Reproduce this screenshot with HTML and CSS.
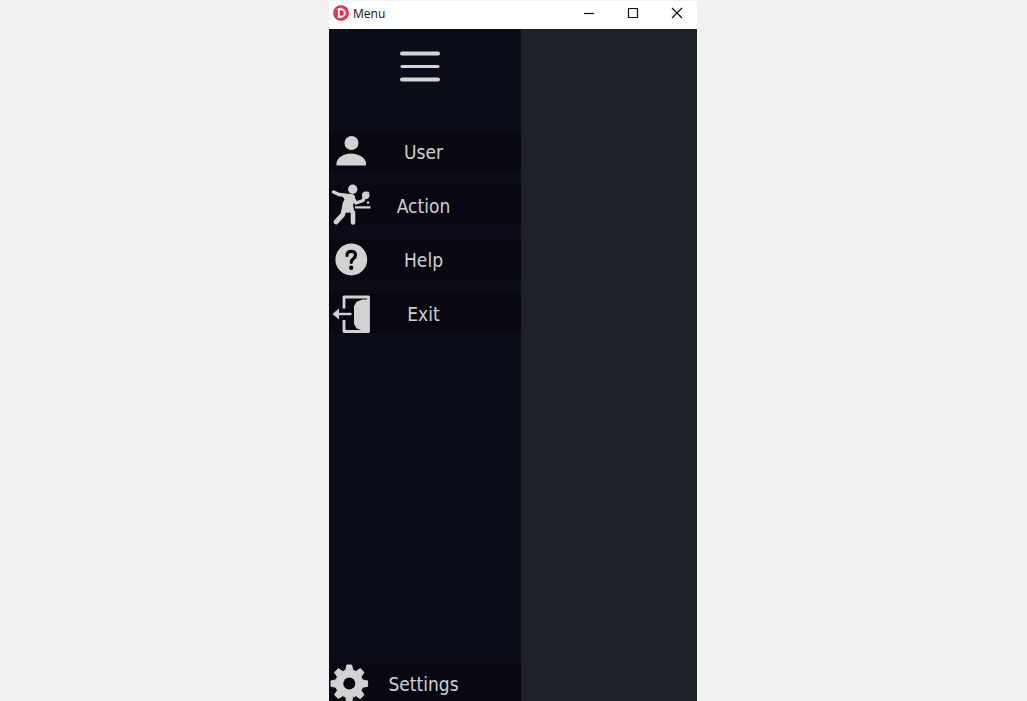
FILE: index.html
```html
<!DOCTYPE html>
<html lang="en">
<head>
<meta charset="utf-8">
<meta name="viewport" content="width=device-width, initial-scale=1">
<title>Menu</title>
<link rel="stylesheet" href="styles.css">
</head>
<body>
<div class="window">
  <header class="titlebar">
    <svg class="app-icon" viewBox="0 0 16 16" aria-hidden="true"><circle cx="8" cy="8" r="7.8" fill="#e3263b"/><circle cx="8" cy="8" r="5.9" fill="#fff" opacity=".3"/><circle cx="8" cy="8" r="5.2" fill="#e3263b"/><path d="M5.8 4.300H8a3.700 3.700 0 0 1 0 7.400H5.800Z" fill="none" stroke="#fff" stroke-width="2"/></svg>
    <h1 class="title">Menu</h1>
    <div class="controls">
      <button class="control" aria-label="Minimize"><svg viewBox="0 0 12 12"><path d="M1 6.5h10"/></svg></button>
      <button class="control" aria-label="Maximize"><svg viewBox="0 0 12 12"><path d="M1.5 1.5h9v9h-9z"/></svg></button>
      <button class="control" aria-label="Close"><svg viewBox="0 0 12 12"><path d="M1 1l10 10M11 1L1 11"/></svg></button>
    </div>
  </header>
  <div class="content">
    <nav class="sidebar">
      <button class="burger" aria-label="Toggle menu"><svg viewBox="0 0 40 32"><path d="M2 2.500h36M2 28.500h36"/><path d="M2 15.500h36" stroke-width="3"/></svg></button>
      <div class="items">
        <button class="item">
          <svg class="icon" viewBox="0 0 40 40"><circle cx="20.500" cy="12" r="7"/><path d="M5.500 34.500V31.500C7 26 13 22.500 20 22.500S33.500 26 35 31.500V34.500Z"/></svg>
          <span class="label">User</span>
        </button>
        <button class="item">
          <svg class="icon" viewBox="0 0 40 40"><circle cx="21.700" cy="4.200" r="4.700"/><g fill="none" stroke="#d2d2d2" stroke-linecap="round" stroke-linejoin="round"><path d="M2.500 7L8 9.500L15 10.500" stroke-width="3.400"/><path d="M21.500 12L25 18L32 15.500L33.500 12" stroke-width="3.400"/><path d="M17 22L22 27.500V37.500" stroke-width="4.600"/><path d="M14 22L11.500 30L5 37" stroke-width="4.800"/></g><path d="M12 8.600L20 9Q23.500 9 24 12L23.500 16L22 20L23 25L17 28L10.500 26Q11 18 13.500 14.500L12 12Z"/><circle cx="34.700" cy="10.300" r="3.700"/><path d="M33 7L38 6.800L38.200 12L34 14ZM24 21.200H39.500V23.600H24Z"/><circle cx="37" cy="17.500" r="1.300"/></svg>
          <span class="label">Action</span>
        </button>
        <button class="item">
          <svg class="icon" viewBox="0 0 40 40"><circle cx="20.300" cy="20.500" r="15.900"/><path d="M16 16.500Q16 12.300 20.200 12.300T24.500 16.200C24.500 19.500 20.200 19.500 20.200 23.500" fill="none" stroke="#090812" stroke-width="3.200" stroke-linecap="round"/><circle cx="20.200" cy="28.700" r="2.200" fill="#090812"/></svg>
          <span class="label">Help</span>
        </button>
        <button class="item">
          <svg class="icon" viewBox="0 0 40 40"><path d="M13 15.500V4H37.500V38.500H13V27" fill="none" stroke="#d2d2d2" stroke-width="2.800" stroke-linejoin="round"/><path d="M37.500 6.500H31.500L26 8.500Q25 9 24.800 10L23 13V31L24.800 34Q25 35 26 35.500L31.500 37.500H37.500Z"/><path d="M7 21H20.500" stroke="#d2d2d2" stroke-width="2.400"/><path d="M1.500 21L8 15.500V26.500Z"/></svg>
          <span class="label">Exit</span>
        </button>
      </div>
      <button class="item settings">
        <svg class="icon" viewBox="0 0 40 40"><path d="M15.800 2H20.700L21.700 7.100L24.900 8.500L29.200 5.600L33 9.400L30.100 13.700L31.500 16.900L36.600 17.900V23.300L31.500 24.300L30.100 27.500L33 31.800L29.200 35.600L24.900 32.700L21.700 34.100L20.700 39.200H15.800L14.800 34.100L11.600 32.700L7.300 35.600L3.500 31.800L6.400 27.500L5 24.300L0 23.300V17.900L5 16.900L6.400 13.700L3.500 9.400L7.300 5.600L11.600 8.500L14.800 7.100Z" stroke="#d2d2d2" stroke-linejoin="round"/><circle cx="18.300" cy="20.600" r="6" fill="#090812"/></svg>
        <span class="label">Settings</span>
      </button>
    </nav>
    <main class="main"></main>
  </div>
</div>
</body>
</html>
```
FILE: styles.css
```css
* { box-sizing: border-box; }
body {
  margin: 0;
  padding: 1px 1px 0 0;
  background: #f1f1f1;
  font-family: "DejaVu Sans Condensed", "Noto Sans", sans-serif;
}
button {
  border: 0;
  padding: 0;
  background: none;
  font: inherit;
  cursor: pointer;
}
.window {
  display: flex;
  flex-direction: column;
  width: 100%;
  max-width: 368px;
  height: calc(100vh - 1px);
  margin: 0 auto;
  overflow: hidden;
}
.titlebar {
  display: flex;
  flex: none;
  align-items: center;
  height: 28px;
  padding: 0 0 4px 4px;
  background: #fff;
}
.app-icon { width: 16px; height: 16px; }
.title {
  margin: 0 0 0 4px;
  padding-top: 1px;
  color: #111;
  font: 12px/16px "Open Sans", "Noto Sans", sans-serif;
}
.controls {
  display: flex;
  margin: 0 -2px 0 auto;
}
.control {
  display: grid;
  place-items: center;
  width: 44px;
  height: 24px;
}
.control svg {
  width: 12px;
  height: 12px;
  fill: none;
  stroke: #111;
  stroke-width: 1.2;
}
.content {
  display: flex;
  flex: 1;
  min-height: 0;
}
.sidebar {
  display: flex;
  flex: none;
  flex-direction: column;
  width: 192px;
  background: #0a0c17;
}
.main {
  flex: 1;
  background: #1e2128;
}
.burger {
  display: flex;
  align-self: center;
  margin: 22px 10px 48px 0;
}
.burger svg {
  width: 40px;
  height: 32px;
  fill: none;
  stroke: #d5d5d3;
  stroke-width: 4;
  stroke-linecap: round;
}
.items {
  display: flex;
  flex-direction: column;
  gap: 14px;
}
.item {
  display: grid;
  grid-template-columns: 40px 1fr 40px;
  align-items: center;
  width: 100%;
  height: 40px;
  padding: 0 5px 0 2px;
  background: #090812;
  color: #cfcfd1;
  font-size: 19px;
  line-height: 24px;
}
.icon {
  width: 40px;
  height: 40px;
  fill: #d2d2d2;
  overflow: visible;
}
.label {
  padding-top: 2px;
  text-align: center;
}
.settings {
  height: 38px;
  margin-top: auto;
}
```
